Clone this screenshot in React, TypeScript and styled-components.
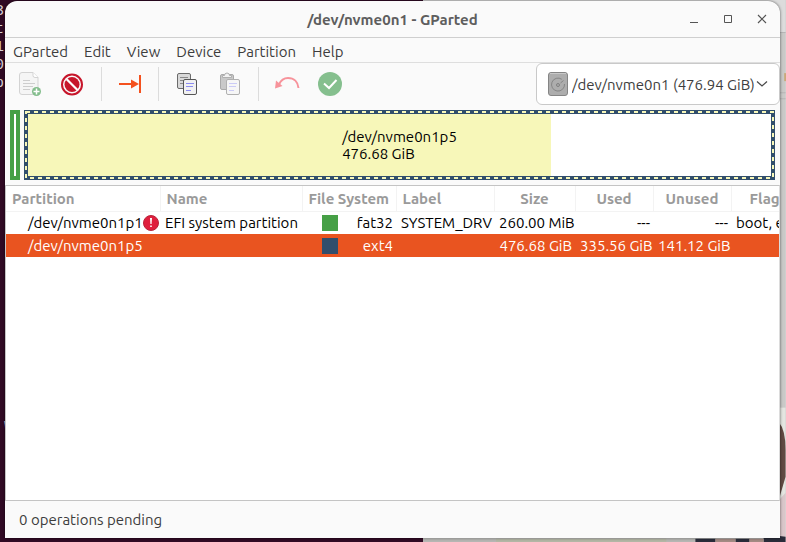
import React from "react";
import styled, { createGlobalStyle } from "styled-components";

const GlobalStyle = createGlobalStyle`
  *, *::before, *::after { box-sizing: border-box; }
  body { margin: 0; overflow: hidden; }
  body, button, select, table {
    font-family: Ubuntu, "Noto Sans", sans-serif;
    font-size: 15px;
    color: #3d3d3d;
  }
`;

const Desktop = styled.div`
  position: relative;
  display: flex;
  min-height: 100vh;
  padding: 1px 6px 4px 5px;
  overflow: hidden;
`;

const Backdrop = styled.div`
  position: absolute;
  inset: 0;
  display: flex;
  background: #d9d9d8;
`;

const Terminal = styled.pre`
  flex: 0 0 calc(54% + 4px);
  margin: 0 0 0 -5px;
  padding-top: 3px;
  background: #300a24;
  color: #d8d0d4;
  font: 15px/18px "Liberation Mono", monospace;
  overflow: hidden;
`;

const Browser = styled.div`
  flex: 1;
  display: flex;
  justify-content: flex-end;
  align-items: stretch;
`;

const BrowserArt = styled.svg`
  flex: 1;
  min-width: 0;
`;

const Window = styled.main`
  position: relative;
  flex: 1;
  min-width: 0;
  display: flex;
  flex-direction: column;
  background: #fafafa;
  border-radius: 12px 12px 0 0;
  box-shadow: 0 0 3px rgba(0, 0, 0, 0.6);
  overflow: hidden;
`;

const TitleBar = styled.header`
  display: grid;
  grid-template-columns: 1fr auto 1fr;
  align-items: center;
  height: 37px;
  border-bottom: 1px solid #cfcfcf;
`;

const Title = styled.h1`
  grid-column: 2;
  margin: 0;
  font-size: 15px;
  font-weight: 700;
  color: #5e5e5e;
`;

const WindowControls = styled.div`
  display: flex;
  justify-content: flex-end;
  padding-right: 1px;
`;

const PlainButton = styled.button`
  display: flex;
  align-items: center;
  justify-content: center;
  padding: 0;
  border: 0;
  background: none;
`;

const WindowButton = styled(PlainButton)`
  width: 34px;
  height: 34px;
`;

const MenuBar = styled.nav`
  display: flex;
  gap: 16px;
  height: 25px;
  padding: 2px 8px 0;
  border-bottom: 1px solid #dedede;
`;

const MenuButton = styled(PlainButton)`
  font-size: 15px;
`;

const ToolBar = styled.div`
  display: flex;
  align-items: center;
  gap: 1px;
  height: 42px;
  padding-left: 4px;
`;

const ToolButton = styled(PlainButton)`
  width: 42px;
  height: 42px;
`;

const Divider = styled.span`
  width: 1px;
  height: 34px;
  margin: 0 6px;
  background: #dcdcdc;
`;

const DevicePicker = styled.label`
  position: relative;
  width: 244px;
  height: 42px;
  margin-left: auto;
  svg {
    position: absolute;
    top: 50%;
    transform: translateY(-50%);
    pointer-events: none;
  }
  svg:first-of-type { left: 12px; }
  svg:last-of-type { right: 12px; }
`;

const DeviceSelect = styled.select`
  appearance: none;
  width: 100%;
  height: 100%;
  padding: 0 20px 0 35px;
  border: 1px solid #c9c9c9;
  border-radius: 6px;
  background: #fff;
`;

const DiskMap = styled.section`
  display: flex;
  gap: 4px;
  height: 70px;
  margin: 5px;
`;

const SmallPartition = styled.div`
  width: 10px;
  border: 4px solid #46a046;
  background: #fff;
`;

const SelectedPartition = styled.div`
  position: relative;
  flex: 1;
  display: flex;
  align-items: center;
  justify-content: center;
  border: 4px solid #314e6c;
  background: linear-gradient(90deg, #f7f7b9 70.4%, #fff 70.4%);
  color: #000;
  line-height: 17px;
`;

const Dashes = styled.svg`
  position: absolute;
  inset: -4px;
  width: calc(100% + 8px);
  height: calc(100% + 8px);
  rect {
    width: calc(100% - 4px);
    height: calc(100% - 4px);
    fill: none;
    stroke: #f7f7b9;
    stroke-width: 2;
    stroke-dasharray: 4 4;
  }
`;

const ListFrame = styled.section`
  flex: 1;
  border: 1px solid #c4c4c4;
  border-right-color: #dcdcdc;
  background: #fff;
  overflow: hidden;
`;

const PartitionTable = styled.table`
  width: 100%;
  table-layout: fixed;
  border-collapse: collapse;
  white-space: nowrap;
`;

const Col = styled.col<{ $w?: number }>`
  width: ${(p) => (p.$w ? `${p.$w}px` : "auto")};
`;

const HeadCell = styled.th<{ $align?: string }>`
  height: 25px;
  padding: 0 6px;
  border-right: 1px solid #f3f3f3;
  border-bottom: 1px solid #f3f3f3;
  color: #9a9a9a;
  font-weight: 700;
  text-align: ${(p) => p.$align ?? "left"};
  &:last-child { padding-left: 18px; border-right: 0; }
`;

const Row = styled.tr<{ $selected?: boolean }>`
  height: 23px;
  background: ${(p) => (p.$selected ? "#e95420" : "#fff")};
  color: ${(p) => (p.$selected ? "#fff" : "#000")};
`;

const Cell = styled.td<{ $align?: string; $indent?: boolean }>`
  padding: 0 3px 0 ${(p) => (p.$indent ? 22 : 5)}px;
  color: inherit;
  line-height: 20px;
  text-align: ${(p) => p.$align ?? "left"};
`;

const Spread = styled.div<{ $inset?: boolean }>`
  display: flex;
  align-items: center;
  justify-content: space-between;
  padding-left: ${(p) => (p.$inset ? 15 : 0)}px;
  svg { flex: none; }
`;

const Swatch = styled.span<{ $color: string }>`
  width: 16px;
  height: 16px;
  background: ${(p) => p.$color};
`;

const StatusBar = styled.footer`
  display: flex;
  align-items: center;
  height: 37px;
  padding: 0 14px;
`;

const NewIcon = () => (
  <svg width="24" height="26" viewBox="0 0 24 26" fill="none">
    <path d="M4 1.5h11l5 5V21a2.5 2.5 0 0 1-2.5 2.5H4A2.5 2.5 0 0 1 1.500 21V4A2.500 2.500 0 0 1 4 1.500z" fill="#f5f5f5" stroke="#d3d3d3" />
    <path d="M15 1.500v3a2 2 0 0 0 2 2h3" fill="#fff" stroke="#d3d3d3" />
    <path d="M5 9.500h7M5 12.500h12M5 15.500h10M5 18.500h7" stroke="#cdcdcd" />
    <circle cx="18.500" cy="20.500" r="4.500" fill="#83bd8c" />
    <path d="M18.500 17.500v6M15.500 20.500h6" stroke="#fff" strokeWidth="1.500" />
  </svg>
);

const DeleteIcon = () => (
  <svg width="24" height="24" viewBox="0 0 24 24" fill="none">
    <circle cx="11" cy="12.500" r="10" stroke="#c7162b" strokeWidth="2" />
    <circle cx="11" cy="12.500" r="7.500" fill="#c7162b" />
    <path d="M5.500 7l11 11" stroke="#fff" strokeWidth="2.200" />
  </svg>
);

const ResizeIcon = () => (
  <svg width="24" height="24" viewBox="0 0 24 24">
    <path d="M1 11h12V7.500l8 4.500-8 4.500V13H1z" fill="#f4511e" />
    <path d="M21 3h2v18h-2z" fill="#f4511e" />
  </svg>
);

const CopyIcon = () => (
  <svg width="24" height="24" viewBox="0 0 24 24" fill="none">
    <rect x="2.500" y="1.500" width="13" height="15" rx="1.500" fill="#d9d9d9" stroke="#6b6b6b" />
    <path d="M5 5.500h8M5 8.500h4M5 11.500h3" stroke="#8a8a8a" />
    <rect x="8.500" y="7.500" width="13" height="15" rx="1.500" fill="#f1f1f1" stroke="#555" />
    <path d="M11 11.500h8M11 14.500h7M11 18.500h5" stroke="#8c8cf0" />
  </svg>
);

const PasteIcon = () => (
  <svg width="24" height="24" viewBox="0 0 24 24" fill="none">
    <rect x="2.500" y="2.500" width="13" height="15" rx="1.500" fill="#c9c9c9" stroke="#aaa" />
    <path d="M4.500 5.500v-2h2a2.500 2.500 0 0 1 5 0h2v2z" fill="#f2f2f2" stroke="#b0b0b0" />
    <rect x="8.500" y="7.500" width="13" height="15" rx="1.500" fill="#f6f6f6" stroke="#b0b0b0" />
    <path d="M11 11.500h8M11 14.500h7M11 18.500h5" stroke="#cbcbf6" />
  </svg>
);

const UndoIcon = () => (
  <svg width="26" height="24" viewBox="0 0 26 24" fill="none">
    <path d="M5 12.500C7 8 10 6 14 6c6 0 10 4 10.500 10" stroke="#f7939b" strokeWidth="2" />
    <path d="M2 8.500L1 16.500L8.500 14z" fill="#f7939b" />
  </svg>
);

const ApplyIcon = () => (
  <svg width="24" height="24" viewBox="0 0 24 24" fill="none">
    <circle cx="12" cy="12" r="12" fill="#85bf8e" />
    <path d="M6 11.500l5 4.500 7.500-8" stroke="#fff" strokeWidth="2" />
  </svg>
);

const DiskIcon = () => (
  <svg width="20" height="24" viewBox="0 0 20 24" fill="none">
    <rect x=".5" y=".5" width="19" height="23" rx="2.500" fill="#adadad" stroke="#858585" />
    <path d="M2 1.500h16" stroke="#c8c8c8" />
    <path d="M13.800 7.300A6.500 6.500 0 1 0 16.500 12" stroke="#858585" />
    <circle cx="10" cy="13" r="1.500" stroke="#808080" />
    <path d="M12.500 11l3-2.500" stroke="#858585" />
  </svg>
);

const ChevronIcon = () => (
  <svg width="12" height="8" viewBox="0 0 12 8" fill="none">
    <path d="M1 1.500l5 4.500 5-4.500" stroke="#4a4a4a" strokeWidth="1.300" />
  </svg>
);

const WarningIcon = () => (
  <svg width="16" height="16" viewBox="0 0 16 16">
    <circle cx="8" cy="8" r="7.500" fill="#df1f3d" stroke="#b8243b" />
    <path d="M7 3h2l-.4 6H7.400zM7.200 10.500h1.600V12H7.200z" fill="#fff" />
  </svg>
);

const MENUS = ["GParted", "Edit", "View", "Device", "Partition", "Help"];

const TERMINAL_TEXT = "3\nt\n1\n0\np" + "\n".repeat(19) + " w";

export default function App() {
  return (
    <>
      <GlobalStyle />
      <Desktop>
        <Backdrop aria-hidden="true">
          <Terminal>{TERMINAL_TEXT}</Terminal>
          <Browser>
            <BrowserArt viewBox="0 0 362 542" preserveAspectRatio="xMaxYMin slice">
              <rect width="362" height="542" fill="#c9c9c7" />
              <rect width="362" height="32" fill="#dcdcdc" />
              <path d="M340 32.500h22M340 92.500h22M340 98.500h22" stroke="#b5b5b5" />
              <rect x="361" y="73" width="1" height="8" fill="#c98b3a" />
              <rect y="538" width="362" height="4" fill="#b6b6b3" />
              <rect x="73" y="538" width="170" height="4" fill="#b3b6a5" />
              <rect x="340" y="407" width="22" height="135" fill="#e4e5e0" />
              <path d="M355 421q7 8 7 28v27l-7 24z" fill="#604a43" />
              <path d="M355 500l7-8v50h-7z" fill="#d9c6c9" />
              <path d="M272 538h20v4h-20zM312 538h14v4h-14zM340 534l14 1 8 1v6h-22z" fill="#2a2c3a" />
              <path d="M292 538h20v4h-20zM326 538h14v4h-14z" fill="#a38a83" />
            </BrowserArt>
          </Browser>
        </Backdrop>
        <Window>
          <TitleBar>
            <Title>/dev/nvme0n1 - GParted</Title>
            <WindowControls>
              <WindowButton aria-label="Minimize">
                <svg width="10" height="10"><path d="M1 8.500h8" stroke="#555" /></svg>
              </WindowButton>
              <WindowButton aria-label="Maximize">
                <svg width="10" height="10"><path d="M1.500 1.500h7v7h-7z" fill="none" stroke="#555" /></svg>
              </WindowButton>
              <WindowButton aria-label="Close">
                <svg width="10" height="10"><path d="M1 1l8 8M9 1l-8 8" stroke="#555" strokeWidth="1.200" /></svg>
              </WindowButton>
            </WindowControls>
          </TitleBar>
          <MenuBar>
            {MENUS.map((m) => <MenuButton key={m}>{m}</MenuButton>)}
          </MenuBar>
          <ToolBar>
            <ToolButton aria-label="New" disabled><NewIcon /></ToolButton>
            <ToolButton aria-label="Delete"><DeleteIcon /></ToolButton>
            <Divider />
            <ToolButton aria-label="Resize/Move"><ResizeIcon /></ToolButton>
            <Divider />
            <ToolButton aria-label="Copy"><CopyIcon /></ToolButton>
            <ToolButton aria-label="Paste" disabled><PasteIcon /></ToolButton>
            <Divider />
            <ToolButton aria-label="Undo" disabled><UndoIcon /></ToolButton>
            <ToolButton aria-label="Apply" disabled><ApplyIcon /></ToolButton>
            <DevicePicker>
              <DeviceSelect aria-label="Device">
                <option>/dev/nvme0n1 (476.94 GiB)</option>
              </DeviceSelect>
              <DiskIcon />
              <ChevronIcon />
            </DevicePicker>
          </ToolBar>
          <DiskMap>
            <SmallPartition />
            <SelectedPartition>
              <Dashes><rect x="2" y="2" /></Dashes>
              <div>/dev/nvme0n1p5<br />476.68 GiB</div>
            </SelectedPartition>
          </DiskMap>
          <ListFrame>
            <PartitionTable>
              <colgroup>
                <Col $w={154} /><Col $w={142} /><Col $w={94} /><Col $w={98} />
                <Col $w={81} /><Col $w={78} /><Col $w={78} /><Col />
              </colgroup>
              <thead>
                <tr>
                  <HeadCell>Partition</HeadCell>
                  <HeadCell>Name</HeadCell>
                  <HeadCell>File System</HeadCell>
                  <HeadCell>Label</HeadCell>
                  <HeadCell $align="center">Size</HeadCell>
                  <HeadCell $align="center">Used</HeadCell>
                  <HeadCell $align="center">Unused</HeadCell>
                  <HeadCell>Flags</HeadCell>
                </tr>
              </thead>
              <tbody>
                <Row>
                  <Cell $indent><Spread>/dev/nvme0n1p1<WarningIcon /></Spread></Cell>
                  <Cell>EFI system partition</Cell>
                  <Cell><Spread $inset><Swatch $color="#46a046" />fat32</Spread></Cell>
                  <Cell>SYSTEM_DRV</Cell>
                  <Cell $align="right">260.00 MiB</Cell>
                  <Cell $align="right">---</Cell>
                  <Cell $align="right">---</Cell>
                  <Cell>boot, esp</Cell>
                </Row>
                <Row $selected>
                  <Cell $indent>/dev/nvme0n1p5</Cell>
                  <Cell />
                  <Cell><Spread $inset><Swatch $color="#314e6c" />ext4</Spread></Cell>
                  <Cell />
                  <Cell $align="right">476.68 GiB</Cell>
                  <Cell $align="right">335.56 GiB</Cell>
                  <Cell $align="right">141.12 GiB</Cell>
                  <Cell />
                </Row>
              </tbody>
            </PartitionTable>
          </ListFrame>
          <StatusBar>0 operations pending</StatusBar>
        </Window>
      </Desktop>
    </>
  );
}
